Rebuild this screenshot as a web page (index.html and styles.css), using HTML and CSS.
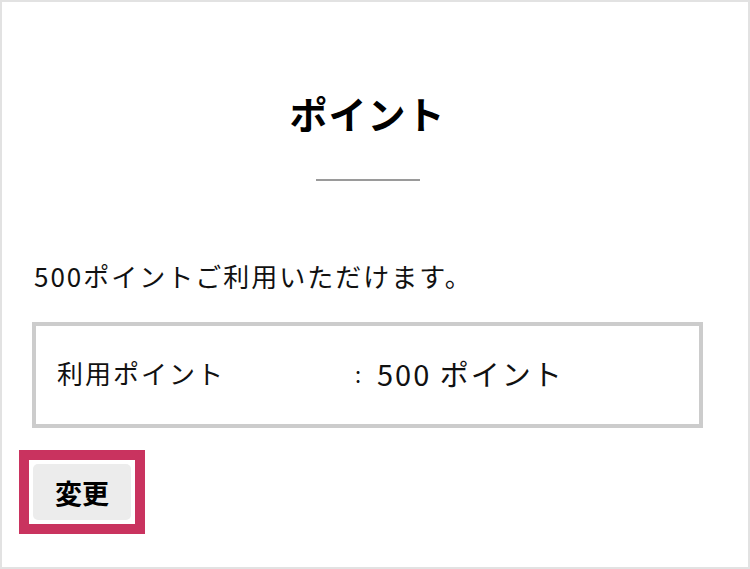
FILE: index.html
```html
<!DOCTYPE html>
<html lang="ja">
<head>
<meta charset="utf-8">
<link rel="stylesheet" href="styles.css">
</head>
<body>
<div class="frame">
  <h1 class="title">ポイント</h1>
  <div class="divider"></div>
  <p class="note">500ポイントご利用いただけます。</p>
  <div class="box">
    <span class="label">利用ポイント</span>
    <span class="colon">:</span>
    <span class="value">500 ポイント</span>
  </div>
  <div class="highlight">
    <button class="change">変更</button>
  </div>
</div>
</body>
</html>
```
FILE: styles.css
```css
html, body {
  margin: 0;
  padding: 0;
  background: #fff;
}
body {
  font-family: "Noto Sans CJK JP", "Noto Sans", sans-serif;
  color: #111;
}
.frame {
  box-sizing: border-box;
  width: 750px;
  height: 569px;
  border: 2px solid #e2e2e2;
  padding: 0 45px 0 30px;
  display: flex;
  flex-direction: column;
  align-items: flex-start;
}
.title {
  align-self: stretch;
  text-align: center;
  font-size: 38px;
  line-height: 38px;
  font-weight: 700;
  letter-spacing: 1px;
  margin: 92px 0 0;
  color: #000;
}
.divider {
  align-self: center;
  width: 104px;
  height: 2px;
  background: #9a9a9a;
  margin-top: 47px;
}
.note {
  margin: 82px 0 0 2px;
  font-size: 26px;
  line-height: 26px;
  letter-spacing: 2px;
}
.box {
  align-self: stretch;
  box-sizing: border-box;
  height: 106px;
  margin-top: 33px;
  border: 4px solid #cccccc;
  display: flex;
  align-items: center;
  padding: 0 0 5px 21px;
}
.label {
  width: 298px;
  font-size: 26px;
  letter-spacing: 2px;
}
.colon {
  width: 22px;
  font-size: 22px;
}
.value {
  font-size: 29px;
  letter-spacing: 2px;
}
.highlight {
  margin: 22px 0 0 -13px;
  border: 10px solid #c9335f;
  padding: 4px;
  display: flex;
}
.change {
  width: 98px;
  height: 56px;
  border: none;
  border-radius: 5px;
  background: #ececec;
  font-family: "Noto Sans CJK JP", sans-serif;
  font-size: 27px;
  font-weight: 700;
  color: #000;
  padding: 0;
}
```
